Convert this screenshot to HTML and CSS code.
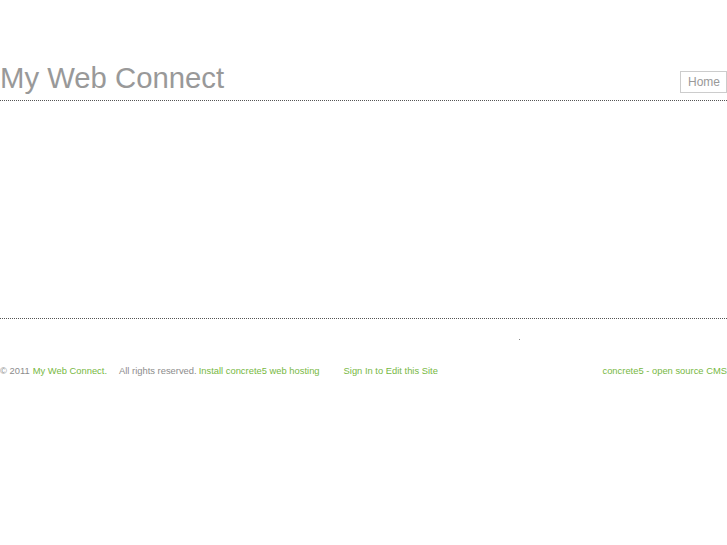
FILE: index.html
```html
<!DOCTYPE html>
<html lang="en">
<head>
<meta charset="utf-8">
<title>My Web Connect</title>
<link rel="stylesheet" href="styles.css">
</head>
<body>
<div class="page">
  <header class="header">
    <h1 class="site-title">My Web Connect</h1>
    <nav class="nav"><a class="nav-link" href="#">Home</a></nav>
  </header>
  <main class="content"></main>
  <div class="dot-row"><span class="dot"></span></div>
  <footer class="footer">
    <div class="footer-left">
      <span class="muted">&copy; 2011</span>
      <a class="flink" href="#">My Web Connect.</a>
      <span class="muted gap-l">All rights reserved.</span>
      <a class="flink tight" href="#">Install concrete5 web hosting</a>
      <a class="flink gap-xl" href="#">Sign In to Edit this Site</a>
    </div>
    <a class="flink" href="#">concrete5 - open source CMS</a>
  </footer>
</div>
</body>
</html>
```
FILE: styles.css
```css
html, body {
  margin: 0;
  padding: 0;
  background: #ffffff;
}
body {
  font-family: "Liberation Sans", Arial, Helvetica, sans-serif;
}
.page {
  width: 727px;
}
.header {
  display: flex;
  justify-content: space-between;
  align-items: flex-end;
  padding-top: 61px;
  border-bottom: 1px dotted #555;
}
.site-title {
  margin: 0 0 5px 0;
  font-size: 29.3px;
  line-height: 34px;
  font-weight: normal;
  color: #999999;
}
.nav {
  margin: 0 0 7px 0;
}
.nav-link {
  display: block;
  font-size: 12px;
  line-height: 14px;
  padding: 3px 6px 3px 7px;
  border: 1px solid #cccccc;
  color: #999999;
  text-decoration: none;
}
.content {
  display: block;
  height: 217px;
  border-bottom: 1px dotted #555;
}
.dot-row {
  padding: 20px 0 0 519px;
  height: 2px;
}
.dot {
  display: block;
  width: 1px;
  height: 1px;
  background: #888;
}
.footer {
  display: flex;
  justify-content: space-between;
  margin-top: 23px;
  font-size: 9.4px;
  line-height: 14px;
}
.footer-left {
  display: flex;
  gap: 3px;
}
.muted {
  color: #8c8c8c;
}
.flink {
  color: #77b843;
  text-decoration: none;
}
.gap-l {
  margin-left: 9px;
}
.tight {
  margin-left: -1px;
}
.gap-xl {
  margin-left: 21px;
}
```
